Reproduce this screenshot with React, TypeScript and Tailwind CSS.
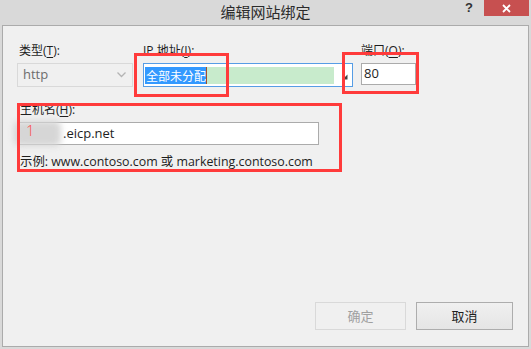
import React from "react";

const ui = "font-['Open_Sans','Noto_Sans_CJK_SC',sans-serif]";
const cjk = "font-['Noto_Sans_CJK_SC',sans-serif]";

// accelerator letter, underlined like the Windows label
const Acc = ({ k }: { k: string }) => <span className="underline underline-offset-2">{k}</span>;

const Mark = ({ className }: { className: string }) => (
  <div className={`absolute border-[3px] border-[#ff3b3b] pointer-events-none ${className}`} />
);

export default function App() {
  return (
    <div className={`relative w-[531px] h-[349px] bg-[#d9d9d9] overflow-hidden text-[#1e1e1e] ${ui}`}>
      {/* title bar */}
      <div className="relative h-[25px] flex items-center justify-center">
        <span className={`text-[15px] leading-[20px] text-[#2b2b2b] -mt-[2px] ${cjk}`}>编辑网站绑定</span>
        <div className="absolute right-[2px] top-0 flex items-start">
          <span className="mt-[1px] mr-[11px] text-[13px] font-bold leading-[14px] text-[#333] font-['Liberation_Sans',sans-serif]">?</span>
          <div className="w-[45px] h-[16px] bg-[#c75050] flex items-center justify-center">
            <svg width="9" height="9" viewBox="0 0 9 9">
              <path d="M1 1 L8 8 M8 1 L1 8" stroke="#fff" strokeWidth="1.8" />
            </svg>
          </div>
        </div>
      </div>

      {/* dialog body */}
      <div className="ml-[2px] w-[527px] h-[322px] border border-[#ababab] bg-[#f0f0f0] flex flex-col pl-[14px] pr-[15px] pt-[16px] pb-[16px]">
        <div className="flex items-start">
          <div className="w-[116px] flex flex-col">
            <label className="h-[17px] text-[12px] leading-[17px] pl-[2px]">类型(<Acc k="T" />):</label>
            <div className="mt-[4px] h-[24px] border border-[#d9d9d9] flex items-center justify-between px-[5px]">
              <span className="text-[13px] text-[#6d6d6d]">http</span>
              <svg width="9" height="6" viewBox="0 0 9 6" className="mr-[1px]">
                <path d="M0.5 0.5 L4.5 4.5 L8.5 0.5" stroke="#b4b4b4" strokeWidth="1.3" fill="none" />
              </svg>
            </div>
          </div>

          <div className="ml-[10px] w-[210px] flex flex-col">
            <label className="h-[17px] text-[12px] leading-[17px]">IP 地址(<Acc k="I" />):</label>
            <div className="mt-[4px] h-[24px] border border-[#569de5] bg-white flex items-center pl-[1px] pr-[4px]">
              <span className={`h-[17px] bg-[#3399ff] text-white text-[12px] leading-[17px] pl-[1px] ${cjk}`}>全部未分配</span>
              <span className="h-[17px] w-[1px] bg-[#a0522d]" />
              <span className="h-[17px] w-[127px] bg-[#c8ebcc]" />
              <svg width="6" height="6" viewBox="0 0 6 6" className="ml-auto mt-[4px]">
                <path d="M5.5 0.5 L0.5 5.5 L5.5 5.5 Z" fill="#444" />
              </svg>
            </div>
          </div>

          <div className="ml-[8px] w-[55px] flex flex-col">
            <label className="h-[17px] text-[12px] leading-[17px]">端口(<Acc k="O" />):</label>
            <div className="mt-[4px] h-[22px] border border-[#ababab] bg-white flex items-center pl-[2px]">
              <span className="text-[13px]">80</span>
            </div>
          </div>
        </div>

        <label className="mt-[14px] h-[17px] text-[12px] leading-[17px] pl-[3px]">主机名(<Acc k="H" />):</label>
        <div className="relative mt-[4px] ml-[2px] w-[300px] h-[23px] border border-[#ababab] bg-white flex items-center pl-[43px]">
          <span className="text-[13px]">.eicp.net</span>
        </div>
        <p className="mt-[8px] pl-[3px] text-[12.4px] leading-[18px]">示例: www.contoso.com 或 marketing.contoso.com</p>

        <div className="mt-auto flex justify-end gap-[10px]">
          <button className={`w-[91px] h-[28px] border border-[#d9d9d9] bg-[#f0f0f0] text-[13px] text-[#a0a0a0] ${cjk}`}>确定</button>
          <button className={`w-[97px] h-[28px] border border-[#adadad] bg-linear-to-b from-[#f0f0f0] to-[#e5e5e5] text-[13px] text-[#1e1e1e] ${cjk}`}>取消</button>
        </div>
      </div>

      {/* blurred-out part of the host name */}
      <div className="absolute left-[14px] top-[121px] w-[47px] h-[25px] bg-[#d6d6d6] rounded-[6px] blur-[3px]" />
      <span className="absolute left-[26px] top-[121px] text-[15px] leading-[18px] font-light text-[#ff4a4a] font-['Open_Sans',sans-serif]">1</span>

      {/* red annotation boxes */}
      <Mark className="left-[134px] top-[53px] w-[95px] h-[44px]" />
      <Mark className="left-[342px] top-[52px] w-[77px] h-[42px]" />
      <Mark className="left-[17px] top-[103px] w-[325px] h-[69px]" />
    </div>
  );
}
